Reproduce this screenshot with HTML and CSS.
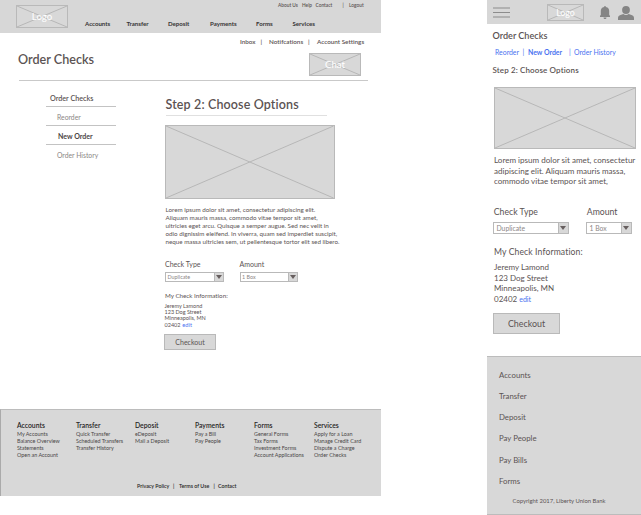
FILE: index.html
```html
<!DOCTYPE html>
<html lang="en">
<head>
<meta charset="utf-8">
<title>Order Checks</title>
<link rel="stylesheet" href="styles.css">
</head>
<body>
<div class="board">
  <div class="desktop">
    <header class="top">
      <div class="ph logo"><svg viewBox="0 0 100 100" preserveAspectRatio="none"><path d="M0 0L100 100M100 0L0 100"/></svg><span>Logo</span></div>
      <div class="top-menus">
        <nav class="utility"><a>About Us</a><a>Help</a><a>Contact</a><i>|</i><a>Logout</a></nav>
        <nav class="primary"><a>Accounts</a><a>Transfer</a><a>Deposit</a><a>Payments</a><a>Forms</a><a>Services</a></nav>
      </div>
    </header>
    <nav class="account"><a>Inbox</a><i>|</i><a>Notifcations</a><i>|</i><a>Account Settings</a></nav>
    <div class="title-row">
      <h1>Order Checks</h1>
      <div class="ph chat"><svg viewBox="0 0 100 100" preserveAspectRatio="none"><path d="M0 0L100 100M100 0L0 100"/></svg><span>Chat</span></div>
    </div>
    <div class="columns">
      <aside class="side">
        <a class="head">Order Checks</a>
        <a class="re">Reorder</a>
        <a class="current">New Order</a>
        <a class="hist">Order History</a>
      </aside>
      <main class="content">
        <h2>Step 2: Choose Options</h2>
        <div class="ph picture"><svg viewBox="0 0 100 100" preserveAspectRatio="none"><path d="M0 0L100 100M100 0L0 100"/></svg></div>
        <p class="lorem">Lorem ipsum dolor sit amet, consectetur adipiscing elit.<br>Aliquam mauris massa, commodo vitae tempor sit amet,<br>ultricies eget arcu. Quisque a semper augue. Sed nec velit in<br>odio dignissim eleifend. In viverra, quam sed imperdiet suscipit,<br>neque massa ultricies sem, ut pellentesque tortor elit sed libero.</p>
        <div class="fields">
          <div><label>Check Type</label><div class="select"><span>Duplicate</span><b><svg viewBox="0 0 6 4"><path d="M0 0H6L3 4Z"/></svg></b></div></div>
          <div><label>Amount</label><div class="select"><span>1 Box</span><b><svg viewBox="0 0 6 4"><path d="M0 0H6L3 4Z"/></svg></b></div></div>
        </div>
        <h3>My Check Information:</h3>
        <address>Jeremy Lamond<br>123 Dog Street<br>Minneapolis, MN<br>02402 <a>edit</a></address>
        <button>Checkout</button>
      </main>
    </div>
    <footer class="foot">
      <div class="sitemap">
        <div><h4>Accounts</h4><a>My Accounts</a><a>Balance Overview</a><a>Statements</a><a>Open an Account</a></div>
        <div><h4>Transfer</h4><a>Quick Transfer</a><a>Scheduled Transfers</a><a>Transfer History</a></div>
        <div><h4>Deposit</h4><a>eDeposit</a><a>Mail a Deposit</a></div>
        <div><h4>Payments</h4><a>Pay a Bill</a><a>Pay People</a></div>
        <div><h4>Forms</h4><a>General Forms</a><a>Tax Forms</a><a>Investment Forms</a><a>Account Applications</a></div>
        <div><h4>Services</h4><a>Apply for a Loan</a><a>Manage Credit Card</a><a>Dispute a Charge</a><a>Order Checks</a></div>
      </div>
      <div class="legal"><a>Privacy Policy</a><i>|</i><a>Terms of Use</a><i>|</i><a>Contact</a></div>
    </footer>
  </div>

  <div class="mobile">
    <header class="m-top">
      <svg class="burger" viewBox="0 0 17 11"><path d="M0 1H17M0 5.5H17M0 10H17"/></svg>
      <div class="ph m-logo"><svg viewBox="0 0 100 100" preserveAspectRatio="none"><path d="M0 0L100 100M100 0L0 100"/></svg><span>Logo</span></div>
      <svg class="bell" viewBox="0 0 10 13"><path d="M5 0C5.6 0 5.9.4 5.9.9C8.4 1.4 9.2 3 9.2 5V8.7L10 10V11H0V10L.8 8.7V5C.8 3 1.6 1.4 4.1.9C4.1.4 4.4 0 5 0ZM3.5 11.4H6.5C6.4 12.4 5.8 13 5 13S3.6 12.4 3.5 11.4Z"/></svg>
      <svg class="user" viewBox="0 0 16 14"><ellipse cx="8" cy="4" rx="3.9" ry="4"/><path d="M0 14V12C0 10.3 1 9.5 2.5 9L5.3 8C6.8 9.2 9.2 9.2 10.7 8L13.5 9C15 9.5 16 10.3 16 12V14Z"/></svg>
    </header>
    <h1>Order Checks</h1>
    <nav class="m-tabs"><a>Reorder</a><i>|</i><a class="on">New Order</a><i>|</i><a>Order History</a></nav>
    <h2>Step 2: Choose Options</h2>
    <div class="ph m-picture"><svg viewBox="0 0 100 100" preserveAspectRatio="none"><path d="M0 0L100 100M100 0L0 100"/></svg></div>
    <p class="m-lorem">Lorem ipsum dolor sit amet, consectetur<br>adipiscing elit. Aliquam mauris massa,<br>commodo vitae tempor sit amet,</p>
    <div class="m-fields">
      <div><label>Check Type</label><div class="select"><span>Duplicate</span><b><svg viewBox="0 0 6 4"><path d="M0 0H6L3 4Z"/></svg></b></div></div>
      <div><label>Amount</label><div class="select narrow"><span>1 Box</span><b><svg viewBox="0 0 6 4"><path d="M0 0H6L3 4Z"/></svg></b></div></div>
    </div>
    <h3>My Check Information:</h3>
    <address>Jeremy Lamond<br>123 Dog Street<br>Minneapolis, MN<br>02402 <a>edit</a></address>
    <button>Checkout</button>
    <footer class="m-foot">
      <a>Accounts</a><a>Transfer</a><a>Deposit</a><a>Pay People</a><a>Pay Bills</a><a>Forms</a>
      <small>Copyright 2017, Liberty Union Bank</small>
    </footer>
  </div>
</div>
</body>
</html>
```
FILE: styles.css
```css
* { box-sizing: border-box; margin: 0; padding: 0; }
body { background: #fff; color: #5b5353; font-family: Lato, "Liberation Sans", sans-serif; font-variant-ligatures: none; width: 641px; height: 515px; overflow: hidden; }
i, address { font-style: normal; }
a, span, i, h1, h2, h3, h4, label, small, address, p { white-space: nowrap; }
.board { display: flex; justify-content: space-between; height: 515px; }
.desktop { width: 381px; display: flex; flex-direction: column; height: 496px; }

.ph { display: grid; place-items: center; background: #d8d8d8; border: 1px solid #b9b9b9; color: #fff; overflow: hidden; }
.ph > * { grid-area: 1 / 1; }
.ph svg { width: 100%; height: 100%; min-height: 0; display: block; }
.ph path { fill: none; stroke: #b7b7b7; stroke-width: 1px; vector-effect: non-scaling-stroke; }

.top { height: 32.5px; background: #d7d7d7; display: flex; padding: 5px 0 0 16px; }
.logo { width: 52px; height: 23px; font-size: 9.6px; line-height: 21px; }
.top-menus { margin-left: 17px; margin-top: -5px; }
.utility { display: grid; grid-template-columns: 24px 13.5px 27px 6.5px auto; margin-left: 193px; font-size: 4.8px; line-height: 11px; font-weight: 600; height: 17.5px; }
.primary { display: grid; grid-template-columns: 41.5px 41.5px 42px 46px 36.5px auto; font-size: 6.1px; line-height: 11px; font-weight: 700; color: #363434; }
.account { display: grid; grid-template-columns: 20.5px 8.5px 39px 9px auto; margin: 3.5px 0 0 240px; font-size: 6.3px; line-height: 11px; height: 11px; font-weight: 600; }
.title-row { display: flex; justify-content: space-between; width: 349px; margin: 6px 0 0 18px; padding-right: 6px; height: 27px; }
.title-row h1 { font-size: 12.6px; line-height: 14px; font-weight: 600; }
.chat { width: 52px; height: 23px; font-size: 9.6px; line-height: 21px; }
.columns { display: flex; margin-left: 19px; width: 348.5px; border-top: 1px solid #c9c9c9; }

.side { width: 70px; margin: 10px 0 0 27px; font-size: 6.8px; color: #8b8686; }
.side a { display: block; height: 19px; line-height: 21px; padding-left: 11px; border-bottom: 1px solid #c3c3c3; }
.side .head { height: 16px; line-height: 16px; padding-left: 4px; color: #5b5353; font-size: 7.2px; font-weight: 600; }
.side .current { padding-left: 12px; color: #4b4444; font-weight: 700; font-size: 7px; }
.side .hist { border: 0; }

.content { width: 174px; margin-left: 49.5px; padding-top: 16px; }
.content h2 { font-size: 12.5px; letter-spacing: .13px; line-height: 16px; height: 19px; width: 161.5px; font-weight: 600; border-bottom: 1.5px solid #e0e0e0; }
.picture { width: 169.5px; height: 74px; margin: 9px 0 0 -.1px; }
.lorem { font-size: 6.25px; line-height: 8.15px; margin-top: 6.5px; }
.fields { display: flex; gap: 16px; margin: 12.5px 0 0 -.5px; font-size: 7px; }
.fields > div { width: 58.5px; }
label { display: block; }
.fields label { line-height: 11px; height: 13.5px; }
.select { display: flex; justify-content: space-between; border: 1px solid #b9b9b9; background: #fff; height: 10px; line-height: 8px; font-size: 5.4px; color: #8d8787; padding-left: 1.5px; }
.select b { width: 9px; background: #d8d8d8; border-left: 1px solid #b9b9b9; display: grid; place-items: center; }
.select svg { width: 6px; height: 4px; fill: #675f5f; display: block; }
.content h3 { font-size: 6.25px; line-height: 10px; font-weight: 400; margin: 9px 0 0 -.5px; }
.content address { font-size: 5.5px; line-height: 6.3px; margin: 1.5px 0 0 -1px; height: 31px; }
address a { color: #4a72f0; margin-left: 2px; }
.content address a { font-size: 5.7px; margin-left: .5px; }
button { display: block; border: 1px solid #b9b9b9; background: #d8d8d8; color: #5b5353; font-family: inherit; }
.content button { width: 52px; height: 16.5px; margin-left: -1.5px; font-size: 7px; line-height: 14px; }

.foot { margin-top: auto; height: 87px; background: #d8d8d8; border-top: 1px solid #bcbcbc; border-left: 1px solid #aaa; padding: 10px 0 0 16px; color: #4a4747; }
.sitemap { display: grid; grid-template-columns: 59px 59px 60px 59px 60px auto; height: 61px; align-content: start; }
.sitemap a { display: block; font-size: 5.4px; line-height: 7.1px; }
.sitemap h4 { font-size: 6.8px; line-height: 11px; font-weight: 600; color: #262424; }
.legal { display: grid; grid-template-columns: 36px 6px 34.5px 4.5px auto; margin-left: 120px; font-size: 5.3px; line-height: 11px; color: #262424; font-weight: 600; }

.mobile { width: 154px; display: flex; flex-direction: column; height: 515px; }
.m-top { height: 24px; background: #d7d7d7; display: flex; align-items: flex-start; padding-left: 6px; }
.m-top > svg { fill: #858585; }
.m-top .burger { width: 17px; height: 11px; margin-top: 7px; stroke: #8c8c8c; stroke-width: 1.2; }
.m-logo { width: 37px; height: 17px; margin: 4px 0 0 37px; font-size: 8.8px; line-height: 15px; }
.bell { width: 10px; height: 13px; margin: 6px 0 0 15.5px; }
.user { width: 16px; height: 14px; margin: 5.5px 0 0 8.5px; }
.mobile h1 { font-size: 9.1px; line-height: 12px; margin: 6px 0 0 5.5px; font-weight: 600; }
.m-tabs { display: grid; grid-template-columns: 27.5px 5.5px 41px 5px auto; margin: 5px 0 0 8px; line-height: 11px; font-size: 6.9px; color: #4a72f0; }
.m-tabs .on { font-weight: 700; }
.mobile h2 { font-size: 8px; letter-spacing: .13px; line-height: 12px; margin: 6px 0 0 5.5px; font-weight: 600; }
.m-picture { width: 142px; height: 62px; margin: 11px 0 0 7px; }
.m-lorem { font-size: 8.05px; line-height: 10.6px; margin: 6px 0 0 7px; height: 32px; }
.m-fields { display: flex; gap: 17px; margin: 18px 0 0 6px; font-size: 8.7px; }
.m-fields label { line-height: 13px; height: 17px; padding-left: .8px; }
.m-fields .select { width: 76px; height: 12px; line-height: 10px; font-size: 6.8px; padding-left: 2.5px; }
.m-fields .narrow { width: 46px; }
.m-fields b { width: 10.5px; }
.mobile h3 { font-size: 8.6px; letter-spacing: .12px; line-height: 12px; margin: 12px 0 0 7px; font-weight: 400; }
.mobile address { font-size: 8px; line-height: 10.6px; margin: 4px 0 0 7px; height: 51px; }
.mobile address a { font-size: 7px; margin-left: 0; }
.mobile button { width: 67px; height: 21px; margin-left: 6px; font-size: 8.9px; line-height: 19px; }
.m-foot { margin-top: 22px; height: 159px; background: #d8d8d8; border-top: 1px solid #bcbcbc; border-bottom: 1px solid #bcbcbc; padding: 8.2px 0 0 12px; font-size: 7.8px; line-height: 21.1px; }
.m-foot a { display: block; }
.m-foot small { display: block; font-size: 5.9px; line-height: 10px; margin: 4px 0 0 13.5px; }
```
